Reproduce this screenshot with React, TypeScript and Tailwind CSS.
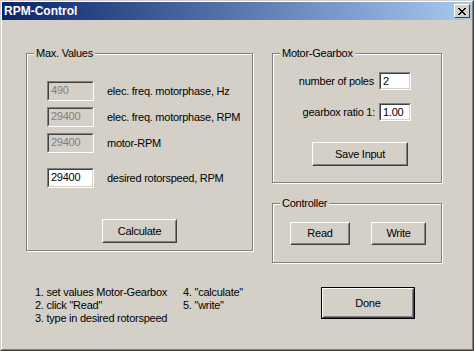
import React from "react";

const font = { fontFamily: '"Liberation Sans", Arial, sans-serif' };

function Group({ label, className, children }: { label: string; className: string; children?: React.ReactNode }) {
  return (
    <div className={"relative border border-[#808080] shadow-[inset_1px_1px_0_#fff,1px_1px_0_#fff] " + className}>
      <div className="absolute -top-[8px] left-[7px] bg-[#d4d0c8] px-[2px] leading-[14px]">{label}</div>
      {children}
    </div>
  );
}

function Field({ value, disabled, className }: { value: string; disabled?: boolean; className: string }) {
  return (
    <div
      className={
        "border border-t-[#808080] border-l-[#808080] border-r-white border-b-white " + className
      }
    >
      <div
        className={
          "h-full w-full border border-t-[#404040] border-l-[#404040] border-r-[#d4d0c8] border-b-[#d4d0c8] pl-[2px] leading-[15px] " +
          (disabled ? "bg-[#d4d0c8] text-[#808080]" : "bg-white text-black")
        }
      >
        {value}
      </div>
    </div>
  );
}

function Button({ label, className, isDefault }: { label: string; className: string; isDefault?: boolean }) {
  const inner = (
    <div className="flex h-full w-full border border-t-white border-l-white border-r-[#404040] border-b-[#404040]">
      <div className="flex h-full w-full items-center justify-center border border-t-[#d4d0c8] border-l-[#d4d0c8] border-r-[#808080] border-b-[#808080]">
        {label}
      </div>
    </div>
  );
  if (isDefault) {
    return <div className={"border border-black " + className}>{inner}</div>;
  }
  return <div className={className}>{inner}</div>;
}

export default function App() {
  return (
    <div
      style={font}
      className="h-[351px] w-[474px] border border-[#d4d0c8] border-r-[#404040] border-b-[#404040] bg-[#d4d0c8] text-[11px] tracking-[-0.25px] text-black"
    >
      <div className="flex h-full w-full flex-col border border-white border-r-[#808080] border-b-[#808080]">
        <div className="flex h-[18px] items-center justify-between bg-[linear-gradient(to_right,#0a246a,#a6caf0)] pl-[2px] pr-[2px]">
          <span className="text-[12px] font-bold tracking-normal text-white">RPM-Control</span>
          <div className="flex h-[14px] w-[16px] items-center justify-center border border-t-white border-l-white border-r-[#404040] border-b-[#404040] bg-[#d4d0c8]">
            <svg width="8" height="7" viewBox="0 0 8 7">
              <path d="M0 0h2v1h1v1h2V1h1V0h2v1h-1v1h-1v1h-1v1h1v1h1v1h1v1H6V6H5V5H3v1H2v1H0V6h1V5h1V4h1V3H2V2H1V1H0z" fill="#000" />
            </svg>
          </div>
        </div>
        <div className="flex pl-[24px] pt-[33px] items-start">
          <Group label="Max. Values" className="h-[198px] w-[227px]">
            <div className="flex flex-col pl-[20px] pt-[27px]">
              <div className="flex h-[20px] items-center">
                <Field value="490" disabled className="h-[20px] w-[47px]" />
                <span className="ml-[13px]">elec. freq. motorphase, Hz</span>
              </div>
              <div className="mt-[6px] flex h-[20px] items-center">
                <Field value="29400" disabled className="h-[20px] w-[47px]" />
                <span className="ml-[13px]">elec. freq. motorphase, RPM</span>
              </div>
              <div className="mt-[6px] flex h-[20px] items-center">
                <Field value="29400" disabled className="h-[20px] w-[47px]" />
                <span className="ml-[13px]">motor-RPM</span>
              </div>
              <div className="mt-[15px] flex h-[20px] items-center">
                <Field value="29400" className="h-[20px] w-[47px]" />
                <span className="ml-[13px]">desired rotorspeed, RPM</span>
              </div>
              <Button label="Calculate" className="ml-[55px] mt-[31px] h-[24px] w-[75px]" />
            </div>
          </Group>
          <div className="ml-[19px] flex flex-col">
            <Group label="Motor-Gearbox" className="h-[130px] w-[170px]">
              <div className="flex flex-col pt-[18px]">
                <div className="flex h-[18px] items-center justify-end pr-[30px]">
                  <span className="mr-[5px]">number of poles</span>
                  <Field value="2" className="h-[18px] w-[32px]" />
                </div>
                <div className="mt-[13px] flex h-[18px] items-center justify-end pr-[30px]">
                  <span className="mr-[4px]">gearbox ratio 1:</span>
                  <Field value="1.00" className="h-[18px] w-[32px]" />
                </div>
                <Button label="Save Input" className="ml-[39px] mt-[21px] h-[24px] w-[96px]" />
              </div>
            </Group>
            <Group label="Controller" className="mt-[20px] h-[60px] w-[170px]">
              <div className="flex pl-[17px] pt-[18px]">
                <Button label="Read" className="h-[23px] w-[60px]" />
                <Button label="Write" className="ml-[21px] h-[23px] w-[55px]" />
              </div>
            </Group>
          </div>
        </div>
        <div className="mt-[23px] flex items-start pl-[33px]">
          <div className="flex w-[148px] flex-col leading-[13px]">
            <span>1. set values Motor-Gearbox</span>
            <span>2. click "Read"</span>
            <span>3. type in desired rotorspeed</span>
          </div>
          <div className="flex flex-col leading-[13px]">
            <span>4. "calculate"</span>
            <span>5. "write"</span>
          </div>
          <Button label="Done" isDefault className="ml-[78px] mt-[1px] h-[32px] w-[94px]" />
        </div>
      </div>
    </div>
  );
}
